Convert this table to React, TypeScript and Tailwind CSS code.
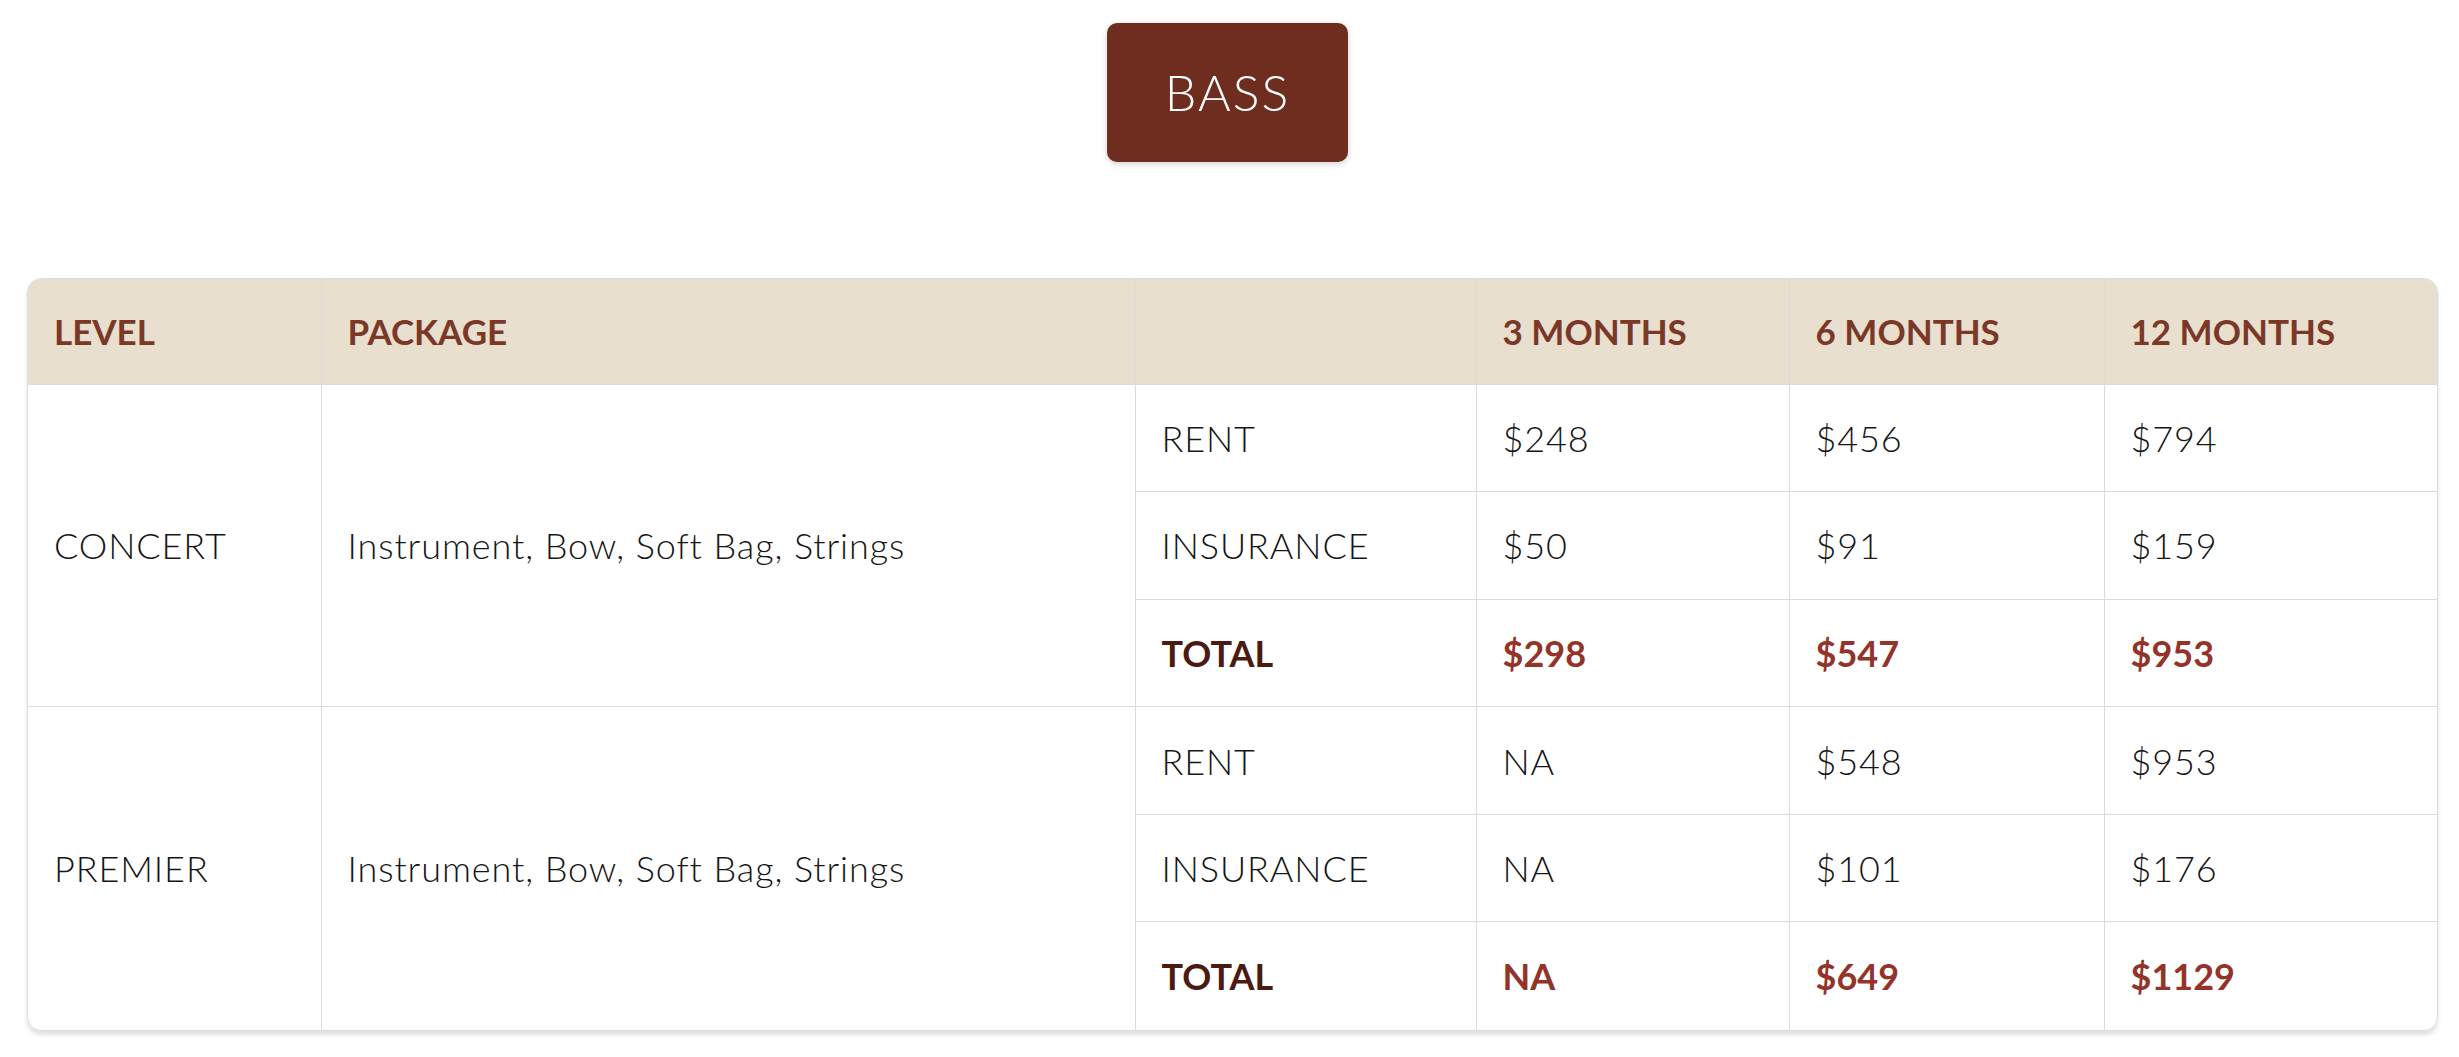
import React from "react";

/* ================= DATA ================= */
type Line = { label: string; values: string[]; total?: boolean };
type Tier = { level: string; pkg: string; lines: Line[] };

const MONTHS = ["3 MONTHS", "6 MONTHS", "12 MONTHS"];

const TIERS: Tier[] = [
  {
    level: "CONCERT",
    pkg: "Instrument, Bow, Soft Bag, Strings",
    lines: [
      { label: "RENT", values: ["$248", "$456", "$794"] },
      { label: "INSURANCE", values: ["$50", "$91", "$159"] },
      { label: "TOTAL", values: ["$298", "$547", "$953"], total: true },
    ],
  },
  {
    level: "PREMIER",
    pkg: "Instrument, Bow, Soft Bag, Strings",
    lines: [
      { label: "RENT", values: ["NA", "$548", "$953"] },
      { label: "INSURANCE", values: ["NA", "$101", "$176"] },
      { label: "TOTAL", values: ["NA", "$649", "$1129"], total: true },
    ],
  },
];

const cell = "border border-[#dcdcdc] px-[26px] align-middle text-left";

/* ================= COMPONENT ================= */
export default function App() {
  return (
    <div
      className="min-h-screen bg-white pt-[23px] pl-[27px] pr-[21px]"
      style={{ fontFamily: "Lato, 'Open Sans', sans-serif" }}
    >
      {/* Tab */}
      <div className="flex justify-center pr-[10px]">
        <button className="w-[241px] h-[139px] rounded-[10px] bg-[#6e2d1e] text-white text-[50px] font-light tracking-[2px] shadow-[0_2px_6px_rgba(0,0,0,0.18)]">
          BASS
        </button>
      </div>

      {/* Pricing table */}
      <div className="mt-[116px] rounded-[14px] overflow-hidden border border-[#dcdcdc] shadow-[0_4px_4px_rgba(0,0,0,0.12)]">
        <table className="w-full table-fixed border-collapse text-[36px]">
          <colgroup>
            <col className="w-[293px]" />
            <col className="w-[814px]" />
            <col className="w-[341px]" />
            <col className="w-[313px]" />
            <col className="w-[315px]" />
            <col />
          </colgroup>
          <thead>
            <tr className="h-[105px] bg-[#e8dfcf] text-[#7b3827] font-bold text-[35px]">
              <th className={`${cell} border-t-0 border-l-0`}>LEVEL</th>
              <th className={`${cell} border-t-0`}>PACKAGE</th>
              <th className={`${cell} border-t-0`}></th>
              {MONTHS.map((m) => (
                <th key={m} className={`${cell} border-t-0 last:border-r-0`}>
                  {m}
                </th>
              ))}
            </tr>
          </thead>
          <tbody className="text-[#151515] font-light tracking-[0.9px]">
            {TIERS.map((tier, ti) =>
              tier.lines.map((line, li) => (
                <tr key={`${ti}-${li}`} className="h-[107.6px]">
                  {li === 0 && (
                    <>
                      <td rowSpan={3} className={`${cell} border-l-0 ${ti === TIERS.length - 1 ? "border-b-0" : ""}`}>
                        {tier.level}
                      </td>
                      <td rowSpan={3} className={`${cell} ${ti === TIERS.length - 1 ? "border-b-0" : ""}`}>
                        {tier.pkg}
                      </td>
                    </>
                  )}
                  <td
                    className={`${cell} ${line.total ? "font-bold tracking-normal text-[#4b1a10]" : ""} ${
                      ti === TIERS.length - 1 && line.total ? "border-b-0" : ""
                    }`}
                  >
                    {line.label}
                  </td>
                  {line.values.map((v, vi) => (
                    <td
                      key={vi}
                      className={`${cell} ${vi === 2 ? "border-r-0" : ""} ${
                        line.total ? "font-bold tracking-normal text-[#94332a]" : ""
                      } ${ti === TIERS.length - 1 && line.total ? "border-b-0" : ""}`}
                    >
                      {v}
                    </td>
                  ))}
                </tr>
              ))
            )}
          </tbody>
        </table>
      </div>
    </div>
  );
}
